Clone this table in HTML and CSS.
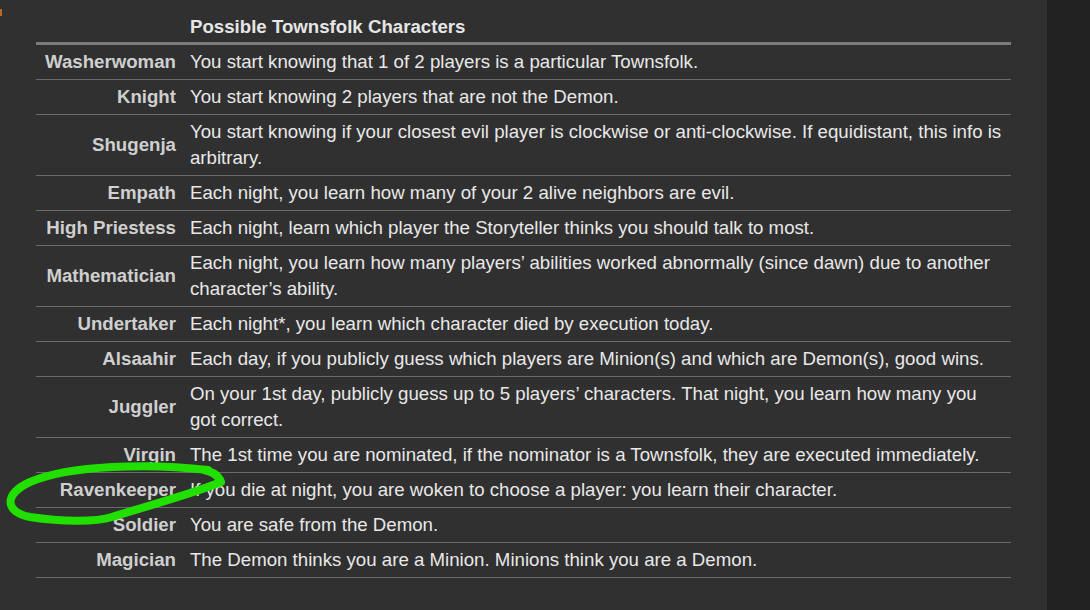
FILE: index.html
```html
<!DOCTYPE html>
<html>
<head>
<meta charset="utf-8">
<link rel="stylesheet" href="styles.css">
</head>
<body>
<div class="page">
  <main class="main">
    <span class="blip"></span>
    <table class="chars">
      <thead>
        <tr><th class="name"></th><th class="desc">Possible Townsfolk Characters</th></tr>
      </thead>
      <tbody>
        <tr><td class="name">Washerwoman</td><td class="desc">You start knowing that 1 of 2 players is a particular Townsfolk.</td></tr>
        <tr><td class="name">Knight</td><td class="desc">You start knowing 2 players that are not the Demon.</td></tr>
        <tr><td class="name">Shugenja</td><td class="desc">You start knowing if your closest evil player is clockwise or anti-clockwise. If equidistant, this info is arbitrary.</td></tr>
        <tr><td class="name">Empath</td><td class="desc">Each night, you learn how many of your 2 alive neighbors are evil.</td></tr>
        <tr><td class="name">High Priestess</td><td class="desc">Each night, learn which player the Storyteller thinks you should talk to most.</td></tr>
        <tr><td class="name">Mathematician</td><td class="desc">Each night, you learn how many players’ abilities worked abnormally (since dawn) due to another character’s ability.</td></tr>
        <tr><td class="name">Undertaker</td><td class="desc">Each night*, you learn which character died by execution today.</td></tr>
        <tr><td class="name">Alsaahir</td><td class="desc">Each day, if you publicly guess which players are Minion(s) and which are Demon(s), good wins.</td></tr>
        <tr><td class="name">Juggler</td><td class="desc">On your 1st day, publicly guess up to 5 players’ characters. That night, you learn how many you got correct.</td></tr>
        <tr><td class="name">Virgin</td><td class="desc">The 1st time you are nominated, if the nominator is a Townsfolk, they are executed immediately.</td></tr>
        <tr><td class="name">Ravenkeeper</td><td class="desc">If you die at night, you are woken to choose a player: you learn their character.</td></tr>
        <tr><td class="name">Soldier</td><td class="desc">You are safe from the Demon.</td></tr>
        <tr><td class="name">Magician</td><td class="desc">The Demon thinks you are a Minion. Minions think you are a Demon.</td></tr>
      </tbody>
    </table>
    <table class="chars outsiders">
      <thead>
        <tr><th class="name"></th><th class="desc">Possible Outsider Characters</th></tr>
      </thead>
    </table>
    <svg class="scribble" width="240" height="60" viewBox="0 460 240 60">
      <path d="M208 470 C150 463 70 465 30 482 C4 494 4 512 30 517 C62 522 96 522 112 517 C150 505 192 494 221 482 C219 476 214 472 204 470" fill="none" stroke="#21e000" stroke-width="8" stroke-linecap="round" stroke-linejoin="round"/>
    </svg>
  </main>
  <aside class="side"></aside>
</div>
</body>
</html>
```

FILE: styles.css
```css
html, body {
  margin: 0;
  padding: 0;
  height: 100%;
  overflow: hidden;
}
body {
  background: #212121;
  font-family: "Liberation Sans", Arial, sans-serif;
}
.page {
  display: flex;
  height: 610px;
}
.main {
  position: relative;
  flex: 0 0 1047px;
  background: #303030;
  padding-top: 9px;
  box-sizing: border-box;
}
.side {
  flex: 1;
  background: #212121;
}
.blip {
  position: absolute;
  left: 0;
  top: 9px;
  width: 2px;
  height: 7px;
  background: #b86a22;
}
.chars {
  border-collapse: collapse;
  margin-left: 36px;
  width: 975px;
  font-size: 18.67px;
  line-height: 26px;
}
.chars th, .chars td {
  padding: 4px 7px;
  vertical-align: middle;
}
.chars thead th {
  border-bottom: 3px solid #7b7b7b;
  font-weight: bold;
  color: #e6e6e6;
  text-align: left;
  padding-top: 5px;
  padding-bottom: 2px;
}
.chars tbody td {
  border-bottom: 1px solid #6a6a6a;
}
.chars td.name {
  text-align: right;
  font-weight: bold;
  color: #cfcfcf;
  white-space: nowrap;
  padding-left: 9px;
}
.chars td.desc {
  color: #e8e8e8;
}
.outsiders {
  margin-top: 21px;
}
.outsiders th.name {
  width: 84px;
}
.scribble {
  position: absolute;
  left: 0;
  top: 460px;
  overflow: visible;
}
```
